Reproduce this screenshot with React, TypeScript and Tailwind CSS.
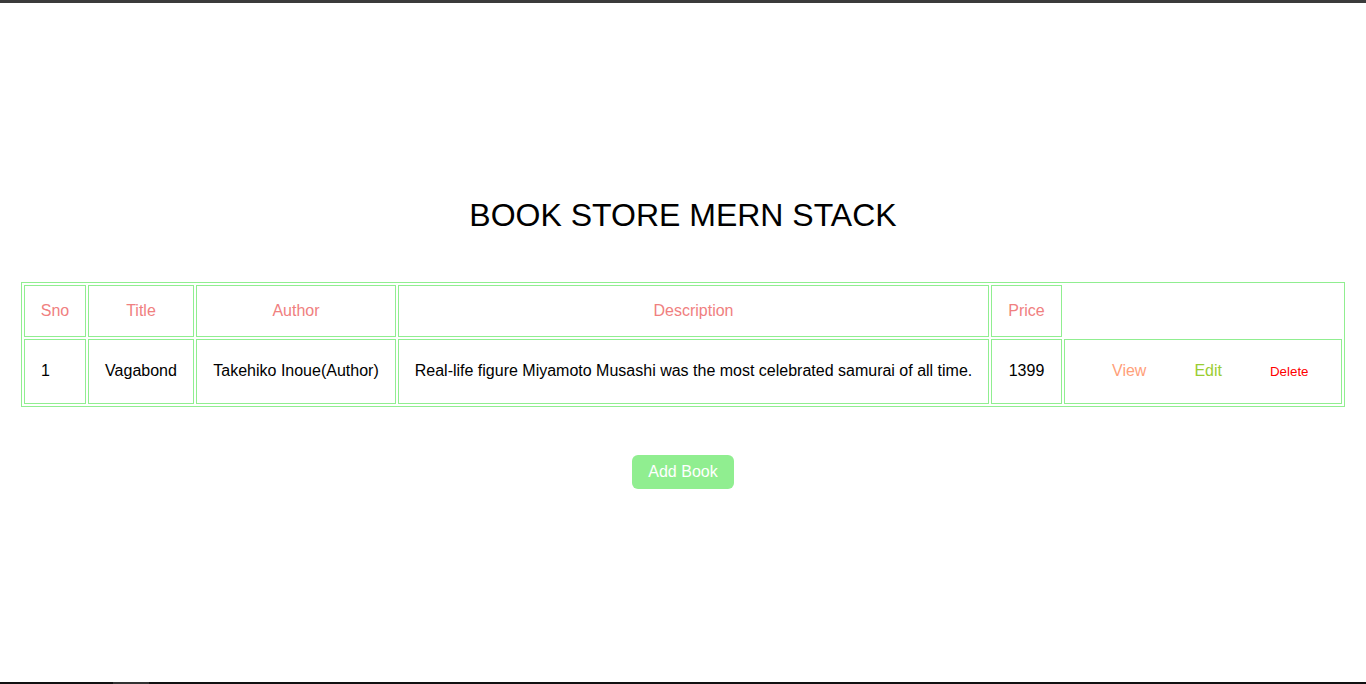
import React from 'react';

type TBook = {
  _id: string;
  title: string;
  author: string;
  description: string;
  price: number;
};

const books: TBook[] = [
  {
    _id: '1',
    title: 'Vagabond',
    author: 'Takehiko Inoue(Author)',
    description:
      'Real-life figure Miyamoto Musashi was the most celebrated samurai of all time.',
    price: 1399,
  },
];

const App = () => {
  return (
    <div className="h-[684px] flex flex-col bg-white font-['Liberation_Sans',Arial,sans-serif] text-black">
      {/* window edge */}
      <div className="h-[3px] bg-[#3b3b3b]" />

      <main className="flex-1 flex flex-col items-center pt-[194px]">
        <h1 className="text-[32px] leading-[37px] font-normal">BOOK STORE MERN STACK</h1>

        {/* Books table */}
        <table className="mt-[48px] w-[1324px] table-fixed border border-[#90ee90] border-separate border-spacing-[2px] text-[16px] leading-[18px]">
          <thead>
            <tr className="h-[52px]">
              <th className="w-[62px] border border-[#90ee90] font-normal text-[#f08080]">Sno</th>
              <th className="w-[106px] border border-[#90ee90] font-normal text-[#f08080]">Title</th>
              <th className="w-[200px] border border-[#90ee90] font-normal text-[#f08080]">Author</th>
              <th className="w-[591px] border border-[#90ee90] font-normal text-[#f08080]">Description</th>
              <th className="w-[71px] border border-[#90ee90] font-normal text-[#f08080]">Price</th>
            </tr>
          </thead>
          <tbody>
            {books.map((book, index) => (
              <tr key={book._id} className="h-[65px]">
                <td className="border border-[#90ee90] text-left pl-4 pb-px">{index + 1}</td>
                <td className="border border-[#90ee90] text-center pb-px">{book.title}</td>
                <td className="border border-[#90ee90] text-center pb-px">{book.author}</td>
                <td className="border border-[#90ee90] text-center pb-px">{book.description}</td>
                <td className="border border-[#90ee90] text-center pb-px">{book.price}</td>
                <td className="border border-[#90ee90] pb-px">
                  <div className="flex items-center gap-12 pl-[47px]">
                    <button className="text-[#ffa07a] text-[16px]">View</button>
                    <button className="text-[#9acd32] text-[16px]">Edit</button>
                    <button className="text-[red] text-[13.33px] leading-[15px]">Delete</button>
                  </div>
                </td>
              </tr>
            ))}
          </tbody>
        </table>

        <button className="mt-[48px] px-4 py-2 rounded-[6px] bg-[#90ee90] text-white text-[16px] leading-[18px]">
          Add Book
        </button>
      </main>

      {/* window edge */}
      <div className="h-[2px] bg-[#111111] flex">
        <div className="ml-[113px] w-[36px] bg-[#333333]" />
      </div>
    </div>
  );
};

export default App;
